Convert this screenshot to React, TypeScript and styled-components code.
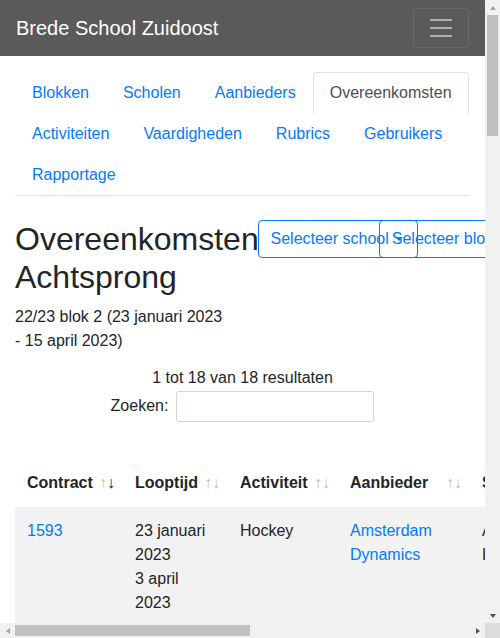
import React from "react";
import styled, { createGlobalStyle, css } from "styled-components";

const GlobalStyle = createGlobalStyle`
  *, *::before, *::after { box-sizing: border-box; }
  html, body { margin: 0; padding: 0; overflow: hidden; }
  body {
    font-family: "Liberation Sans", Arial, sans-serif;
    font-size: 16px;
    line-height: 1.5;
    color: #212529;
    background: #fff;
  }
`;

/* ---------- window frame with scrollbars ---------- */

const Frame = styled.div`
  display: grid;
  grid-template-columns: 485px 15px;
  grid-template-rows: 623px 15px;
  width: 500px;
  height: 638px;
`;

const Viewport = styled.div`
  overflow: hidden;
  min-width: 0;
`;

const VScroll = styled.div`
  display: flex;
  flex-direction: column;
  background: #f1f1f1;
`;

const HScroll = styled.div`
  display: flex;
  background: #f1f1f1;
`;

const Corner = styled.div`
  background: #dcdcdc;
`;

const ArrowBox = styled.div`
  flex: 0 0 15px;
  width: 15px;
  height: 15px;
  display: flex;
  align-items: center;
  justify-content: center;
`;

const Triangle = styled.span<{ $dir: "up" | "down" | "left" | "right"; $dim?: boolean }>`
  width: 0;
  height: 0;
  ${(p) => {
    const c = p.$dim ? "#a3a3a3" : "#505050";
    switch (p.$dir) {
      case "up":
        return css`border-left: 3.5px solid transparent; border-right: 3.5px solid transparent; border-bottom: 4px solid ${c};`;
      case "down":
        return css`border-left: 3.5px solid transparent; border-right: 3.5px solid transparent; border-top: 4px solid ${c};`;
      case "left":
        return css`border-top: 3.5px solid transparent; border-bottom: 3.5px solid transparent; border-right: 4px solid ${c};`;
      default:
        return css`border-top: 3.5px solid transparent; border-bottom: 3.5px solid transparent; border-left: 4px solid ${c};`;
    }
  }}
`;

const VTrack = styled.div`
  flex: 1;
  padding: 0 2px;
`;

const HTrack = styled.div`
  flex: 1;
  padding: 2px 0;
`;

const VThumb = styled.div`
  height: 121px;
  background: #c1c1c1;
`;

const HThumb = styled.div`
  width: 235px;
  height: 100%;
  background: #c1c1c1;
`;

/* ---------- page ---------- */

const Navbar = styled.nav`
  display: flex;
  align-items: center;
  justify-content: space-between;
  padding: 8px 16px;
  background: #5a5a5a;
`;

const Brand = styled.a`
  color: #fff;
  font-size: 20px;
  line-height: 30px;
  padding: 5px 0;
  text-decoration: none;
  white-space: nowrap;
`;

const Toggler = styled.button`
  display: flex;
  align-items: center;
  justify-content: center;
  width: 56px;
  height: 40px;
  padding: 4px 12px;
  background: transparent;
  border: 1px solid rgba(255, 255, 255, 0.1);
  border-radius: 4px;
`;

const Container = styled.main`
  padding: 0 15px 16px;
`;

const Tabs = styled.ul`
  display: flex;
  flex-wrap: wrap;
  list-style: none;
  margin: 16px 0 0;
  padding: 0;
  border-bottom: 1px solid #dee2e6;
`;

const TabItem = styled.li`
  margin-bottom: -1px;
`;

const TabLink = styled.a<{ $active?: boolean }>`
  display: block;
  padding: 8px 16px;
  line-height: 24px;
  border: 1px solid transparent;
  border-top-left-radius: 4px;
  border-top-right-radius: 4px;
  color: #007bff;
  text-decoration: none;
  white-space: nowrap;
  ${(p) =>
    p.$active &&
    css`
      color: #495057;
      background: #fff;
      border-color: #dee2e6 #dee2e6 #fff;
    `}
`;

const Headline = styled.section`
  display: grid;
  grid-template-columns: 1fr 1fr;
  margin: 24px -15px 0;
`;

const TitleCol = styled.div`
  min-width: 0;
  padding: 0 15px;
`;

const Title = styled.h1`
  margin: 0 0 8px;
  font-size: 32px;
  font-weight: 500;
  line-height: 1.2;
`;

const Period = styled.p`
  margin: 0 0 13px;
`;

const Selectors = styled.div`
  display: grid;
  grid-template-columns: 1fr 1fr;
  min-width: 0;
`;

const SelectorCell = styled.div`
  min-width: 0;
  padding: 0 15px;
`;

const DropButton = styled.button`
  display: inline-flex;
  align-items: center;
  white-space: nowrap;
  padding: 6px 14px 6px 12px;
  font-family: inherit;
  font-size: 16px;
  line-height: 24px;
  color: #007bff;
  background: transparent;
  border: 1px solid #007bff;
  border-radius: 4px;

  &::after {
    content: "";
    display: inline-block;
    margin-left: 6px;
    border-top: 4.8px solid;
    border-right: 4.8px solid transparent;
    border-left: 4.8px solid transparent;
    border-bottom: 0;
  }
`;

const Info = styled.div`
  text-align: center;
  white-space: nowrap;
`;

const Filter = styled.label`
  display: flex;
  justify-content: center;
  align-items: center;
  gap: 8px;
  margin-top: 1px;
  white-space: nowrap;
`;

const SearchInput = styled.input`
  width: 198px;
  height: 31px;
  padding: 4px 8px;
  font-family: inherit;
  font-size: 14px;
  border: 1px solid #ced4da;
  border-radius: 3px;
`;

const Table = styled.table`
  width: 924px;
  table-layout: fixed;
  border-collapse: collapse;
  margin-top: 37px;
`;

const HeadCell = styled.th<{ $w: number }>`
  width: ${(p) => p.$w}px;
  padding: 12px 8px 12px 12px;
  text-align: left;
  vertical-align: bottom;
  font-weight: 700;
  white-space: nowrap;
`;

const HeadInner = styled.div`
  display: flex;
  align-items: center;
  justify-content: space-between;
`;

const SortArrows = styled.span`
  display: flex;
  font-weight: 400;
`;

const Arrow = styled.span<{ $on?: boolean }>`
  display: inline-block;
  width: 8px;
  text-align: right;
  opacity: ${(p) => (p.$on ? 1 : 0.3)};
`;

const Row = styled.tr`
  &:nth-child(odd) {
    background: rgba(0, 0, 0, 0.05);
  }
`;

const Cell = styled.td`
  padding: 12px;
  vertical-align: top;
  overflow-wrap: break-word;
`;

const Link = styled.a`
  color: #007bff;
  text-decoration: none;
`;

const Pagination = styled.ul`
  display: flex;
  list-style: none;
  margin: 6px 0 0;
  padding: 0;
  width: 455px;
  justify-content: center;
`;

const PageLink = styled.li<{ $active?: boolean }>`
  padding: 6px 12px;
  margin-left: -1px;
  border: 1px solid #dee2e6;
  color: ${(p) => (p.$active ? "#fff" : "#6c757d")};
  background: ${(p) => (p.$active ? "#007bff" : "#fff")};
`;

const tabs = [
  "Blokken",
  "Scholen",
  "Aanbieders",
  "Overeenkomsten",
  "Activiteiten",
  "Vaardigheden",
  "Rubrics",
  "Gebruikers",
  "Rapportage",
];

const columns: { label: string; w: number; on?: "up" | "down" }[] = [
  { label: "Contract", w: 108, on: "down" },
  { label: "Looptijd", w: 105 },
  { label: "Activiteit", w: 110 },
  { label: "Aanbieder", w: 132 },
  { label: "School", w: 140 },
  { label: "Lesdagen", w: 115 },
  { label: "Status", w: 110 },
  { label: "Bedrag", w: 104 },
];

const activities = [
  ["Hockey", "Amsterdam Dynamics"],
  ["Voetbal", "Sportbedrijf Zuidoost"],
  ["Dans", "DansCentrum Bijlmer"],
  ["Judo", "Judoschool Gein"],
  ["Theater", "Theater Munganga"],
  ["Koken", "Kookstudio Zuidoost"],
  ["Schaken", "Schaakclub Bijlmer"],
  ["Tekenen", "Atelier Kleur"],
  ["Muziek", "Muziekschool Zuidoost"],
  ["Basketbal", "Basketbal Academy"],
  ["Turnen", "Turnvereniging Gein"],
  ["Coderen", "Code Kids"],
  ["Zwemmen", "Zwembad Bijlmer"],
  ["Atletiek", "AV Zuidoost"],
  ["Streetdance", "Urban Moves"],
  ["Natuur", "Natuurschool Gaasperpark"],
  ["Boksen", "Boxing Zuidoost"],
  ["Tennis", "Tennisclub Gein"],
];

const ends = ["3 april 2023", "27 maart 2023", "10 april 2023"];
const lineCounts = [4, 4, 5, 4, 6, 5, 4, 5, 6, 4, 5, 4, 6, 5, 4, 5, 6, 4];
const days = ["di 24-01", "di 31-01", "di 07-02", "di 14-02", "di 21-02", "di 07-03"];

const rows = activities.map(([activity, provider], i) => ({
  id: 1593 + i,
  start: "23 januari 2023",
  end: ends[i % ends.length],
  activity,
  provider,
  school: "Achtsprong Hoofdlocatie",
  days: days.slice(0, lineCounts[i]),
  status: i % 3 === 0 ? "Actief" : "Getekend",
  amount: `€ ${(450 + i * 35).toFixed(2).replace(".", ",")}`,
}));

const TogglerIcon = () => (
  <svg width="30" height="30" viewBox="0 0 30 30" aria-hidden="true">
    <path
      d="M4 7h22M4 15h22M4 23h22"
      stroke="rgba(255,255,255,0.5)"
      strokeWidth="2"
      strokeMiterlimit="10"
      fill="none"
    />
  </svg>
);

export default function App() {
  return (
    <>
      <GlobalStyle />
      <Frame>
        <Viewport>
          <Navbar>
            <Brand href="#">Brede School Zuidoost</Brand>
            <Toggler aria-label="Menu">
              <TogglerIcon />
            </Toggler>
          </Navbar>
          <Container>
            <Tabs>
              {tabs.map((t) => (
                <TabItem key={t}>
                  <TabLink href="#" $active={t === "Overeenkomsten"}>
                    {t}
                  </TabLink>
                </TabItem>
              ))}
            </Tabs>

            <Headline>
              <TitleCol>
                <Title>Overeenkomsten Achtsprong</Title>
                <Period>22/23 blok 2 (23 januari 2023 - 15 april 2023)</Period>
              </TitleCol>
              <Selectors>
                <SelectorCell>
                  <DropButton>Selecteer school</DropButton>
                </SelectorCell>
                <SelectorCell>
                  <DropButton>Selecteer blok</DropButton>
                </SelectorCell>
              </Selectors>
            </Headline>

            <Info>1 tot 18 van 18 resultaten</Info>
            <Filter>
              Zoeken:
              <SearchInput type="search" />
            </Filter>

            <Table>
              <thead>
                <tr>
                  {columns.map((c) => (
                    <HeadCell key={c.label} $w={c.w}>
                      <HeadInner>
                        {c.label}
                        <SortArrows>
                          <Arrow $on={c.on === "up"}>↑</Arrow>
                          <Arrow $on={c.on === "down"}>↓</Arrow>
                        </SortArrows>
                      </HeadInner>
                    </HeadCell>
                  ))}
                </tr>
              </thead>
              <tbody>
                {rows.map((r) => (
                  <Row key={r.id}>
                    <Cell>
                      <Link href="#">{r.id}</Link>
                    </Cell>
                    <Cell>
                      {r.start}
                      <br />
                      {r.end}
                    </Cell>
                    <Cell>{r.activity}</Cell>
                    <Cell>
                      <Link href="#">{r.provider}</Link>
                    </Cell>
                    <Cell>{r.school}</Cell>
                    <Cell>
                      {r.days.map((d, j) => (
                        <div key={j}>{d}</div>
                      ))}
                    </Cell>
                    <Cell>{r.status}</Cell>
                    <Cell>{r.amount}</Cell>
                  </Row>
                ))}
              </tbody>
            </Table>

            <Pagination>
              <PageLink>Vorige</PageLink>
              <PageLink $active>1</PageLink>
              <PageLink>Volgende</PageLink>
            </Pagination>
          </Container>
        </Viewport>

        <VScroll>
          <ArrowBox>
            <Triangle $dir="up" $dim />
          </ArrowBox>
          <VTrack>
            <VThumb />
          </VTrack>
          <ArrowBox>
            <Triangle $dir="down" />
          </ArrowBox>
        </VScroll>

        <HScroll>
          <ArrowBox>
            <Triangle $dir="left" $dim />
          </ArrowBox>
          <HTrack>
            <HThumb />
          </HTrack>
          <ArrowBox>
            <Triangle $dir="right" />
          </ArrowBox>
        </HScroll>

        <Corner />
      </Frame>
    </>
  );
}
